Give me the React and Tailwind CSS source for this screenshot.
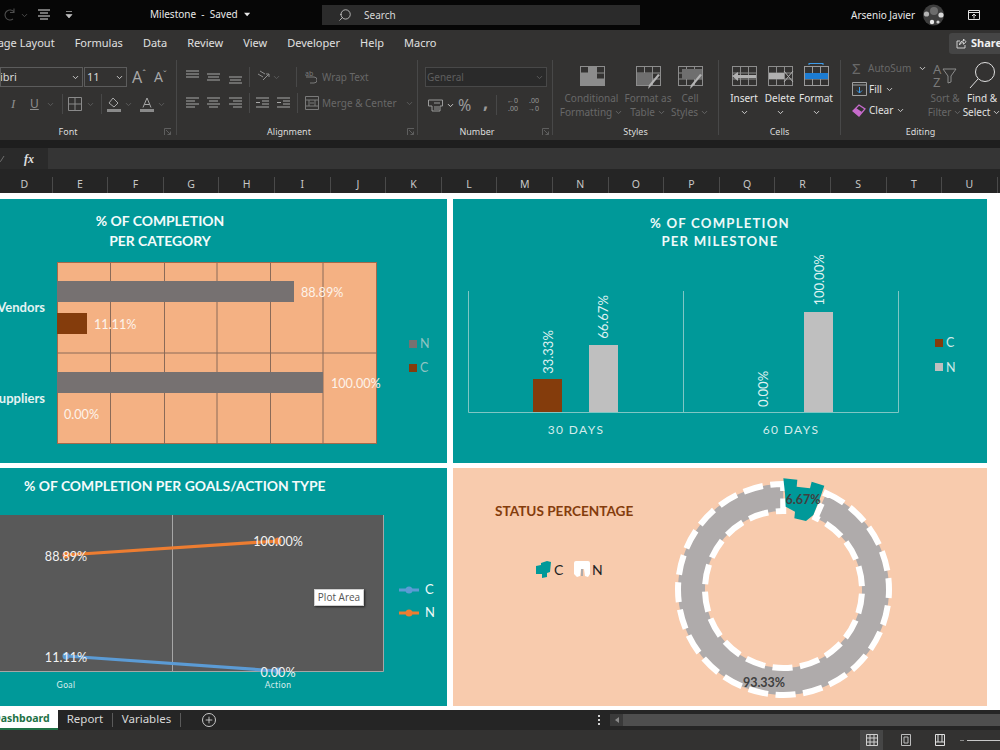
import React from "react";
import { ChevronDown, Search, Plus } from "lucide-react";

const Chev = ({ c = "text-[#8a8a8a]", cn = "" }) => <ChevronDown className={`${c} ${cn} w-[9px] h-[9px] shrink-0`} strokeWidth={2.5} />;
const Sep = ({ cn = "" }) => <div className={`w-px h-[20px] bg-[#484848] shrink-0 ${cn}`} />;

const Lines = ({ rows, w = 14, h = 14, color = "#a8a8a8", cn = "" }) => (
  <svg width={w} height={h} viewBox={`0 0 ${w} ${h}`} className={`shrink-0 ${cn}`}>
    {rows.map((r, i) => <line key={i} x1={r[0]} x2={r[1]} y1={r[2]} y2={r[2]} stroke={r[3] || color} strokeWidth="1" />)}
  </svg>
);
const AL = [[0, 13, 2], [0, 9, 5], [0, 13, 8], [0, 9, 11]];
const AC = [[0, 13, 2], [2, 11, 5], [0, 13, 8], [2, 11, 11]];
const AR = [[0, 13, 2], [4, 13, 5], [0, 13, 8], [4, 13, 11]];

const Launcher = ({ cn = "" }) => (
  <svg width="8" height="8" viewBox="0 0 8 8" className={`shrink-0 ${cn}`}><path d="M.5 7V.5H7M2 2l4.5 4.5M6.5 3.5v3h-3" fill="none" stroke="#5e5e5e" /></svg>
);

const Group = ({ cn, label, labelCn = "", launcher, children }) => (
  <div className={`${cn} shrink-0 h-[75px] flex flex-col`}>
    <div className="h-[65px] shrink-0">{children}</div>
    <div className="h-[14px] flex items-center text-[9px] text-[#dcdcdc]">
      <div className={`flex-1 text-center ${labelCn}`}>{label}</div>
      {launcher}
    </div>
  </div>
);

const Big = ({ cn = "", children, l1, l2, chev, dim }) => (
  <div className={`flex flex-col items-center ${cn}`}>
    <div className="h-[27px] flex items-start justify-center mt-[4px]">{children}</div>
    <div className={`text-[10px] leading-[14px] whitespace-nowrap ${dim ? "text-[#686868]" : "text-[#e2e2e2]"}`}>{l1}</div>
    <div className={`text-[10px] leading-[14px] whitespace-nowrap flex items-center gap-[2px] ${dim ? "text-[#686868]" : "text-[#e2e2e2]"}`}>
      {l2}{chev && <Chev c={dim ? "text-[#686868]" : "text-[#d0d0d0]"} />}
    </div>
  </div>
);

const TableBase = ({ children, stroke = "#8c8c8c" }) => (
  <svg width="28" height="26" viewBox="0 0 28 26" className="shrink-0">
    <rect x="2.5" y="2.5" width="24" height="19" fill="none" stroke={stroke} />
    <path d="M10.5 2.5v19M18.5 2.5v19M2.5 9h24M2.5 15h24" stroke={stroke} fill="none" />
    {children}
  </svg>
);

function TitleBar() {
  return (
    <div className="h-[30px] bg-[#060606] flex items-center text-[#e8e8e8] shrink-0">
      <svg width="14" height="16" viewBox="0 0 14 16" className="ml-[2px] shrink-0"><path d="M12 5a5 5 0 1 0-1 7M12 1.5V5.5H8" fill="none" stroke="#4d4d4d" strokeWidth="1.1" /></svg>
      <Chev c="text-[#4d4d4d]" cn="ml-[4px]" />
      <Lines w={14} h={14} color="#e0e0e0" cn="ml-[8px]" rows={[[1, 13, 2], [3, 11, 5], [1, 13, 8], [3, 11, 11]]} />
      <svg width="8" height="10" viewBox="0 0 8 10" className="ml-[14px] shrink-0"><path d="M1 1.5h6M1 4.5h6l-3 3.5z" fill="#bdbdbd" stroke="#bdbdbd" strokeWidth=".7" /></svg>
      <div className="ml-[77px] w-[100px] text-[10px] flex items-center whitespace-pre -mt-[1px]">Milestone  -  Saved
        <svg width="7" height="5" viewBox="0 0 7 5" className="ml-[6px]"><path d="M0 .5h7L3.5 4.5z" fill="#e8e8e8" /></svg>
      </div>
      <div className="ml-[72px] w-[318px] h-[20px] bg-[#2b2b2b] flex items-center text-[10px] text-[#d8d8d8]">
        <Search className="w-[14px] h-[14px] ml-[16px] -scale-x-100 text-[#d8d8d8]" strokeWidth={1.3} />
        <span className="ml-[12px]">Search</span>
      </div>
      <div className="ml-[211px] text-[10px] whitespace-nowrap w-[63px]">Arsenio Javier</div>
      <svg width="21" height="22" viewBox="0 0 21 22" className="ml-[9px] shrink-0">
        <circle cx="10.5" cy="11" r="10.5" fill="#3e3e3e" /><circle cx="11" cy="7" r="4" fill="#6c6c6c" />
        <circle cx="18" cy="11" r="2.6" fill="#d8d8d8" /><circle cx="3.5" cy="10" r="2.6" fill="#b4b4b4" /><circle cx="9" cy="18" r="2.2" fill="#e8e8e8" /><circle cx="15" cy="18" r="1.6" fill="#cfcfcf" />
      </svg>
      <svg width="14" height="12" viewBox="0 0 14 12" className="ml-[23px] shrink-0"><path d="M1.5 1.5h11v9h-11zM1.5 3.5h11M7 9.5V5.5M5 7l2-2 2 2" fill="none" stroke="#e0e0e0" /></svg>
    </div>
  );
}

function TabsRow() {
  return (
    <div className="h-[30px] bg-[#333231] flex items-center pb-[4px] text-[11px] text-[#e0e0e0] overflow-hidden shrink-0">
      <span className="-ml-[9px] whitespace-nowrap">Page Layout</span>
      <div className="flex gap-[20px] ml-[20px]">
        <span>Formulas</span><span>Data</span><span>Review</span><span>View</span><span>Developer</span><span>Help</span><span>Macro</span>
      </div>
      <div className="ml-auto -mr-[6px] w-[57px] h-[21px] bg-[#454545] rounded-[3px] flex items-center pl-[7px] gap-[4px] font-bold text-[#f0f0f0]">
        <svg width="11" height="11" viewBox="0 0 11 11" className="shrink-0"><path d="M4 3H1v7h8V7M3.5 7c0-3 2-4 4-4V1L10 3.8 7.5 6.3V4.6c-2 0-3.2.6-4 2.4z" fill="none" stroke="#dcdcdc" strokeWidth=".9" /></svg>
        Share
      </div>
    </div>
  );
}

function FontGroup() {
  return (
    <Group cn="w-[176px]" label="Font" labelCn="pr-[28px]" launcher={<Launcher cn="mr-[4px]" />}>
      <div className="flex items-center mt-[7px] h-[20px] text-[11px] text-[#d8d8d8]">
        <div className="w-[83px] h-[20px] border border-[#5c5c5c] flex items-center overflow-hidden">
          <span className="-ml-[17px] flex-1 whitespace-nowrap">Calibri</span><Chev c="text-[#d0d0d0]" cn="mr-[2px]" />
        </div>
        <div className="w-[43px] h-[20px] ml-[1px] border border-[#5c5c5c] flex items-center pl-[2px]">
          <span className="flex-1">11</span><Chev c="text-[#d0d0d0]" cn="mr-[2px]" />
        </div>
        <span className="ml-[5px] w-[17px] text-[16px] text-[#a8a8a8] leading-none whitespace-nowrap">A<span className="text-[9px] align-top">ˆ</span></span>
        <span className="ml-[5px] w-[17px] text-[14px] text-[#a8a8a8] leading-none whitespace-nowrap">A<span className="text-[9px] align-top">ˇ</span></span>
      </div>
      <div className="flex items-center mt-[7px] h-[20px] text-[#8e8e8e]">
        <span className="ml-[11px] w-[10px] text-[13px] italic [font-family:'Liberation_Serif',serif]">I</span>
        <span className="ml-[9px] w-[10px] text-[12px] underline">U</span>
        <Chev c="text-[#5c5c5c]" cn="ml-[6px]" />
        <Sep cn="ml-[7px]" />
        <svg width="14" height="14" viewBox="0 0 14 14" className="ml-[5px] shrink-0"><path d="M.5.5h13v13H.5zM7 .5v13M.5 7h13" fill="none" stroke="#8a8a8a" /></svg>
        <Chev c="text-[#5c5c5c]" cn="ml-[4px]" />
        <Sep cn="ml-[6px]" />
        <svg width="14" height="15" viewBox="0 0 14 15" className="ml-[5px] shrink-0"><path d="M6 1l5 5-4 4-5-4z" fill="none" stroke="#a8a8a8" /><rect x="0" y="12" width="14" height="3" fill="#8a8a8a" /></svg>
        <Chev c="text-[#5c5c5c]" cn="ml-[3px]" />
        <svg width="14" height="15" viewBox="0 0 14 15" className="ml-[7px] shrink-0"><path d="M3 10.5L7 1l4 9.5M4.5 7.5h5" fill="none" stroke="#a8a8a8" /><rect x="0" y="12" width="14" height="3" fill="#8a8a8a" /></svg>
        <Chev c="text-[#5c5c5c]" cn="ml-[3px]" />
      </div>
    </Group>
  );
}

function AlignGroup() {
  return (
    <Group cn="w-[241px] border-l border-[#484848]" label="Alignment" labelCn="pr-[6px]" launcher={<Launcher cn="mr-[2px]" />}>
      <div className="flex items-center mt-[8px] h-[18px] pl-[9px] text-[10px] text-[#686868]">
        <Lines rows={[[0, 13, 1], [0, 13, 4], [0, 13, 7]]} />
        <Lines cn="ml-[7px]" rows={[[0, 13, 4], [1, 12, 7], [0, 13, 10]]} />
        <Lines cn="ml-[8px]" rows={[[0, 13, 7], [1, 12, 10], [0, 13, 13]]} />
        <Sep cn="ml-[6px]" />
        <svg width="15" height="14" viewBox="0 0 15 14" className="ml-[6px] shrink-0"><path d="M2 4l5 3M4 1l5 3M7 10l6-6M10 4h3v3" fill="none" stroke="#8e8e8e" /></svg>
        <Chev c="text-[#5c5c5c]" cn="ml-[1px]" />
        <Sep cn="ml-[15px]" />
        <svg width="12" height="14" viewBox="0 0 12 14" className="ml-[8px] shrink-0"><path d="M1 7h8a2.5 2.5 0 0 1 0 6H5" fill="none" stroke="#7a7a7a" /><text x="0" y="6" fontSize="7" fill="#7a7a7a">ab</text></svg>
        <span className="ml-[5px] whitespace-nowrap">Wrap Text</span>
      </div>
      <div className="flex items-center mt-[8px] h-[18px] pl-[9px] text-[10px] text-[#686868]">
        <Lines rows={AL} /><Lines cn="ml-[7px]" rows={AC} /><Lines cn="ml-[8px]" rows={AR} />
        <Sep cn="ml-[6px]" />
        <Lines cn="ml-[6px]" rows={[[0, 13, 2], [6, 13, 5], [6, 13, 8], [0, 13, 11], [0, 4, 6.5]]} />
        <Lines cn="ml-[7px]" rows={[[0, 13, 2], [6, 13, 5], [6, 13, 8], [0, 13, 11], [0, 4, 6.5]]} />
        <Sep cn="ml-[6px]" />
        <svg width="14" height="14" viewBox="0 0 14 14" className="ml-[7px] shrink-0"><path d="M.5.5h13v13H.5zM.5 4h13M.5 10h13M4 4v6M10 4v6M5 7h4" fill="none" stroke="#7a7a7a" /></svg>
        <span className="ml-[3px] whitespace-nowrap">Merge &amp; Center</span>
        <Chev c="text-[#5c5c5c]" cn="ml-[8px]" />
      </div>
    </Group>
  );
}

function NumberGroup() {
  return (
    <Group cn="w-[135px] border-l border-[#484848]" label="Number" labelCn="pr-[6px]" launcher={<Launcher cn="mr-[2px]" />}>
      <div className="ml-[7px] mt-[7px] w-[122px] h-[20px] border border-[#484848] bg-[#2a2a2a] flex items-center pl-[1px] text-[10px] text-[#5e5e5e]">
        <span className="flex-1">General</span><Chev c="text-[#5c5c5c]" cn="mr-[2px]" />
      </div>
      <div className="flex items-center mt-[8px] h-[20px] pl-[10px] text-[#9a9a9a]">
        <svg width="15" height="13" viewBox="0 0 15 13" className="shrink-0"><path d="M.5 1h14v6H12v5H4V7H.5z" fill="none" stroke="#9a9a9a" /><path d="M6 4h6M6 8h5M6 10h5" stroke="#9a9a9a" /></svg>
        <Chev c="text-[#cfcfcf]" cn="ml-[3px]" />
        <span className="ml-[3px] text-[16px] leading-none w-[16px]">%</span>
        <span className="ml-[9px] text-[18px] leading-none w-[6px] font-bold -mt-[6px]">,</span>
        <Sep cn="ml-[7px]" />
        <div className="ml-[5px] text-[7px] leading-[8px] w-[16px] text-right whitespace-nowrap">←0<br />.00</div>
        <div className="ml-[5px] text-[7px] leading-[8px] w-[16px] text-right whitespace-nowrap">.00<br />→0</div>
      </div>
    </Group>
  );
}

function StylesGroup() {
  return (
    <Group cn="w-[166px] border-l border-[#484848]" label="Styles">
      <div className="flex pl-[6px]">
        <Big cn="w-[65px]" dim l1="Conditional" l2="Formatting" chev>
          <TableBase><rect x="11" y="3" width="7" height="6" fill="#8c8c8c" /><rect x="3" y="9" width="15" height="6" fill="#8c8c8c" /><rect x="3" y="15" width="23" height="6" fill="#8c8c8c" /></TableBase>
        </Big>
        <Big cn="w-[52px] -ml-[2px]" dim l1="Format as" l2="Table" chev>
          <TableBase><path d="M3 9h15v12H3z" fill="#6f6f6f" /><path d="M26 11L17 22l-3 3 1-4 9-11z" fill="#b4b4b4" /></TableBase>
        </Big>
        <Big cn="w-[40px] -ml-[4px]" dim l1="Cell" l2="Styles" chev>
          <TableBase><path d="M6 5h20v10H6z" fill="#6f6f6f" /><path d="M26 11L17 22l-3 3 1-4 9-11z" fill="#b4b4b4" /></TableBase>
        </Big>
      </div>
    </Group>
  );
}

function CellsGroup() {
  const B = ({ children, t }) => (
    <div className="w-[36px] flex flex-col items-center">
      <div className="h-[27px] mt-[4px]">{children}</div>
      <div className="text-[10px] leading-[14px] text-[#e6e6e6]">{t}</div>
      <div className="h-[14px] flex items-center"><Chev c="text-[#d8d8d8]" /></div>
    </div>
  );
  return (
    <Group cn="w-[122px] border-l border-[#484848]" label="Cells">
      <div className="flex pl-[7px]">
        <B t="Insert"><TableBase><path d="M2 12l6-4v3h18v3H8v3z" fill="#b0b0b0" /></TableBase></B>
        <B t="Delete"><TableBase><rect x="3" y="9" width="15" height="6" fill="#b0b0b0" /><path d="M18 7l9 11M27 7l-9 11" stroke="#b0b0b0" /></TableBase></B>
        <B t="Format">
          <svg width="28" height="26" viewBox="0 0 28 26" className="-mt-[1px]"><path d="M7 .5h14M7 0v2M21 0v2" stroke="#3d9bea" /><rect x="2.5" y="3.5" width="24" height="19" fill="none" stroke="#9a9a9a" /><path d="M10.5 3.5v19M18.5 3.5v19M2.5 16h24" stroke="#9a9a9a" /><rect x="3" y="10" width="23" height="6" fill="#1c7cd2" /></svg>
        </B>
      </div>
    </Group>
  );
}

function EditingGroup() {
  return (
    <Group cn="w-[160px] border-l border-[#484848]" label="Editing" labelCn="pl-[12px] pr-[12px]">
      <div className="flex">
        <div className="w-[94px] pl-[11px] text-[10px] -mt-[2px]">
          <div className="flex items-center h-[20px] text-[#686868]">
            <span className="text-[15px] w-[15px] leading-none">Σ</span><span className="ml-[1px]">AutoSum</span><Chev c="text-[#d0d0d0]" cn="ml-[7px]" />
          </div>
          <div className="flex items-center h-[20px] mt-[1px] text-[#e2e2e2]">
            <svg width="15" height="14" viewBox="0 0 15 14" className="shrink-0"><path d="M.5.5h14v13H.5zM.5 3h14" fill="none" stroke="#a0a0a0" /><path d="M7.5 5v6M5 8.5l2.5 2.5L10 8.5" fill="none" stroke="#3d9bea" /></svg>
            <span className="ml-[2px]">Fill</span><Chev c="text-[#d0d0d0]" cn="ml-[3px]" />
          </div>
          <div className="flex items-center h-[20px] mt-[1px] text-[#e2e2e2]">
            <svg width="15" height="13" viewBox="0 0 15 13" className="shrink-0"><path d="M1 7l6-6 6 4-6 7z" fill="none" stroke="#c76bcc" strokeWidth="1.3" /><path d="M1 7l3-3 6 4-3 4z" fill="#c76bcc" /></svg>
            <span className="ml-[2px]">Clear</span><Chev c="text-[#d0d0d0]" cn="ml-[3px]" />
          </div>
        </div>
        <Big cn="w-[32px] ml-[1px]" dim l1="Sort &amp;" l2="Filter" chev>
          <svg width="26" height="26" viewBox="0 0 26 26" className="-mt-[1px]"><text x="1" y="11" fontSize="13" fill="#7a7a7a">A</text><text x="1" y="24" fontSize="13" fill="#7a7a7a">Z</text><path d="M11 6h13l-5 7v6l-3 1v-7z" fill="none" stroke="#8c8c8c" /></svg>
        </Big>
        <Big cn="w-[36px] ml-[3px]" l1="Find &amp;" l2="Select" chev>
          <svg width="28" height="30" viewBox="0 0 28 30" className="-mt-[3px]"><circle cx="17" cy="11" r="9.5" fill="none" stroke="#e0e0e0" /><path d="M10 18L2 27" stroke="#e0e0e0" /></svg>
        </Big>
      </div>
    </Group>
  );
}

function Ribbon() {
  return (
    <div className="h-[80px] bg-[#333231] flex overflow-hidden shrink-0">
      <FontGroup /><AlignGroup /><NumberGroup /><StylesGroup /><CellsGroup /><EditingGroup />
    </div>
  );
}

function FormulaBar() {
  return (
    <div className="bg-[#1e1e1e] pt-[8px] shrink-0">
      <div className="h-[21px] flex bg-[#2a2a2a]">
        <div className="w-[47px] flex items-center text-[#b8b8b8]">
          <svg width="5" height="8" viewBox="0 0 5 8" className="shrink-0"><path d="M-1 5l1.5 1.5L4 1" fill="none" stroke="#6e6e6e" /></svg>
          <span className="ml-[19px] text-[12px] italic font-bold [font-family:'Liberation_Serif',serif] text-[#e0e0e0]">fx</span>
        </div>
        <div className="flex-1 bg-[#353535] ml-[1px]" />
      </div>
    </div>
  );
}

const COLS = "DEFGHIJKLMNOPQRSTU".split("");
function ColHeaders() {
  return (
    <div className="h-[24px] bg-[#252525] flex overflow-hidden shrink-0">
      <div className="flex -ml-[3px] items-end">
        {COLS.map((c) => (
          <div key={c} className="w-[55.6px] h-[16px] shrink-0 border-r border-[#4a4a4a] flex items-center justify-center text-[10.5px] text-[#c8c8c8]">{c}</div>
        ))}
      </div>
    </div>
  );
}

const LB = "[font-family:Lato,sans-serif]";

function Panel1() {
  const grid = [110.5, 164.5, 217, 270.5, 323];
  return (
    <div className="bg-[#009999] h-[264px] flex flex-col overflow-hidden">
      <div className={`h-[62px] w-[320px] pt-[12px] text-center text-[13.9px] leading-[20px] font-bold text-[#f4fbfb] ${LB}`}>
        % OF COMPLETION<br />PER CATEGORY
      </div>
      <svg width="447" height="202" viewBox="0 261 447 202" className={`block ${LB}`}>
        <rect x="57.5" y="262.5" width="319" height="181" fill="#F4B183" stroke="#A3694A" />
        {grid.map((x) => <line key={x} x1={x} x2={x} y1="263" y2="444" stroke="#8a6a58" />)}
        <line x1="57" x2="377" y1="353" y2="353" stroke="#8a6a58" />
        <rect x="57" y="281" width="237" height="21" fill="#767171" />
        <rect x="57" y="313" width="30" height="21" fill="#843C0C" />
        <rect x="57" y="372" width="266" height="21" fill="#767171" />
        <g fill="#fdf3ea" fontSize="12.6">
          <text x="301" y="297">88.89%</text><text x="94" y="329">11.11%</text><text x="331" y="388">100.00%</text><text x="64" y="419">0.00%</text>
        </g>
        <g fill="#e4f3f3" fontSize="13" fontWeight="700" textAnchor="end">
          <text x="45" y="312">Vendors</text><text x="45" y="403">Suppliers</text>
        </g>
        <rect x="409" y="340" width="8" height="8" fill="#767171" /><rect x="409" y="364" width="8" height="8" fill="#843C0C" />
        <g fill="#8fc4c2" fontSize="12.5"><text x="420" y="348">N</text><text x="420" y="372">C</text></g>
      </svg>
    </div>
  );
}

function Panel2() {
  return (
    <div className="bg-[#009999] h-[264px] flex flex-col overflow-hidden">
      <div className={`h-[56px] pt-[15px] text-center text-[13.2px] leading-[18px] font-bold tracking-[1.2px] text-[#eef9f9] ${LB}`}>
        <div className="w-[534px]">% OF COMPLETION<br />PER MILESTONE</div>
      </div>
      <svg width="531" height="208" viewBox="453 255 531 208" className={`block ${LB}`}>
        <path d="M468.5 291v121.5h430V291M683.5 291v121" fill="none" stroke="#7fc6c4" />
        <rect x="533" y="379" width="29" height="33" fill="#843C0C" />
        <rect x="589" y="345" width="29" height="67" fill="#BFBFBF" />
        <rect x="804" y="312" width="29" height="100" fill="#BFBFBF" />
        <g fill="#dff1f1" fontSize="13" textAnchor="middle">
          <text transform="translate(553 352) rotate(-90)">33.33%</text>
          <text transform="translate(608 317) rotate(-90)">66.67%</text>
          <text transform="translate(768 389) rotate(-90)">0.00%</text>
          <text transform="translate(824 280) rotate(-90)">100.00%</text>
        </g>
        <g fill="#d4ecec" fontSize="12" textAnchor="middle" letterSpacing="1.4">
          <text x="576" y="434">30 DAYS</text><text x="791" y="434">60 DAYS</text>
        </g>
        <rect x="935" y="339" width="8" height="8" fill="#843C0C" /><rect x="935" y="363" width="8" height="8" fill="#BFBFBF" />
        <g fill="#cfe9e8" fontSize="12.5"><text x="946" y="347">C</text><text x="946" y="372">N</text></g>
      </svg>
    </div>
  );
}

function Panel3() {
  return (
    <div className="bg-[#009999] h-[238px] relative overflow-hidden">
      <div className={`h-[47px] pl-[24px] pt-[9px] text-[13.9px] leading-[18px] font-bold text-[#f4fbfb] whitespace-nowrap ${LB}`}>% OF COMPLETION PER GOALS/ACTION TYPE</div>
      <svg width="447" height="191" viewBox="0 515 447 191" className={`block ${LB}`}>
        <rect x="-2" y="515" width="385" height="156.5" fill="#595959" />
        <path d="M-2 671.5h385.5V515" fill="none" stroke="#a6a6a6" />
        <line x1="172.5" x2="172.5" y1="515" y2="671" stroke="#a6a6a6" />
        <line x1="66" y1="555" x2="278" y2="541" stroke="#ED7D31" strokeWidth="3.2" />
        <circle cx="66" cy="555" r="3.5" fill="#ED7D31" /><circle cx="278" cy="541" r="3.5" fill="#ED7D31" />
        <line x1="66" y1="656" x2="278" y2="671" stroke="#5B9BD5" strokeWidth="3.2" />
        <circle cx="66" cy="656" r="3.5" fill="#5B9BD5" /><circle cx="278" cy="671" r="3.5" fill="#5B9BD5" />
        <g fill="#f2f2f2" fontSize="12.6" textAnchor="middle">
          <text x="66" y="561">88.89%</text><text x="278" y="546">100.00%</text><text x="66" y="662">11.11%</text><text x="278" y="677">0.00%</text>
        </g>
        <g fill="#d8eeee" fontSize="8.5" textAnchor="middle" letterSpacing=".4">
          <text x="66" y="688">Goal</text><text x="278" y="688">Action</text>
        </g>
        <line x1="399" x2="419" y1="590" y2="590" stroke="#5B9BD5" strokeWidth="3" /><circle cx="409" cy="590" r="3.5" fill="#5B9BD5" />
        <line x1="399" x2="419" y1="613" y2="613" stroke="#ED7D31" strokeWidth="3" /><circle cx="409" cy="613" r="3.5" fill="#ED7D31" />
        <g fill="#eef9f9" fontSize="13"><text x="425" y="594">C</text><text x="425" y="617">N</text></g>
      </svg>
      <div className="absolute left-[314px] top-[121px] w-[50px] h-[17px] bg-white border border-[#d0d0d0] shadow-[1px_1px_2px_rgba(0,0,0,0.6)] flex items-center justify-center text-[10px] text-[#555] [font-family:'Open_Sans',sans-serif]">Plot Area</div>
    </div>
  );
}

const polar = (r, deg) => {
  const a = (deg * Math.PI) / 180;
  return [(783.5 + r * Math.sin(a)).toFixed(2), (589.5 - r * Math.cos(a)).toFixed(2)].join(" ");
};
const RING = `M${polar(105.5, 24)} A105.5 105.5 0 1 1 ${polar(105.5, 359.8)} L${polar(78.5, 359.8)} A78.5 78.5 0 1 0 ${polar(78.5, 24)} Z`;
const TEAL = [[430, 40], [472, 44], [470, 65], [510, 70], [515, 50], [553, 62], [540, 100], [520, 150], [498, 168], [463, 160], [465, 140], [437, 125], [435, 85]]
  .map(([x, y]) => `${640 + x / 3},${465 + y / 3}`).join(" ");

function Panel4() {
  return (
    <div className="bg-[#F8CBAD] h-[238px] flex overflow-hidden">
      <div className={`w-[207px] shrink-0 pl-[42px] pt-[33px] ${LB}`}>
        <div className="text-[13.6px] leading-[20px] font-bold text-[#843C0C] whitespace-nowrap">STATUS PERCENTAGE</div>
        <div className="flex items-center mt-[39px] ml-[41px] text-[14px] text-[#222] h-[18px]">
          <svg width="16" height="17" viewBox="0 0 16 17" className="shrink-0"><path d="M5 4V2l6-2 4 1-1 10-3 1v4l-5 1v-4H0V5z" fill="#009999" /></svg>
          <span className="ml-[2px] w-[20px]">C</span>
          <svg width="16" height="17" viewBox="0 0 16 17" className="shrink-0"><path d="M2 0h12q2 0 2 2v11l-2 3-3-1-1-7H7l-1 7-3 1-3-3V2q0-2 2-2z" fill="#fff" /><rect x="7" y="8" width="2" height="7" fill="#AFABAB" /></svg>
          <span className="ml-[2px]">N</span>
        </div>
      </div>
      <svg width="250" height="238" viewBox="660 468 250 238" className={`block shrink-0 ${LB}`}>
        <path d={RING} fill="#AFABAB" stroke="#fff" strokeWidth="6" strokeDasharray="20 7.5" />
        <polygon points={TEAL} fill="#009999" />
        <g fill="#404040" fontSize="12.5" fontWeight="700" textAnchor="middle">
          <text x="803" y="504">6.67%</text><text x="764" y="687">93.33%</text>
        </g>
      </svg>
    </div>
  );
}

function Sheet() {
  return (
    <div className="h-[517px] bg-white shrink-0 pt-[6px] overflow-hidden">
      <div className="grid grid-cols-[447px_534px] grid-rows-[264px_238px] gap-x-[6px] gap-y-[5px]">
        <Panel1 /><Panel2 /><Panel3 /><Panel4 />
      </div>
    </div>
  );
}

function SheetTabs() {
  return (
    <div className="h-[20px] bg-[#252525] flex items-stretch text-[11.5px] text-[#d8d8d8] shrink-0 overflow-hidden">
      <div className="w-[58px] bg-white text-[#1e7145] font-bold text-[10.5px] flex items-center border-b-2 border-[#1e7145] overflow-hidden whitespace-nowrap">
        <span className="-ml-[7px]">Dashboard</span>
      </div>
      <div className="w-[55px] flex items-center justify-center border-r border-[#5a5a5a] my-[3px] pb-[3px]">Report</div>
      <div className="w-[68px] flex items-center justify-center border-r border-[#5a5a5a] my-[3px] pb-[3px]">Variables</div>
      <div className="ml-[21px] flex items-center">
        <div className="w-[14px] h-[14px] rounded-full border border-[#c8c8c8] flex items-center justify-center"><Plus className="w-[10px] h-[10px] text-[#d8d8d8]" strokeWidth={2} /></div>
      </div>
      <div className="ml-[382px] flex flex-col justify-center gap-[2px]">
        <div className="w-[2px] h-[2px] bg-[#d0d0d0]" /><div className="w-[2px] h-[2px] bg-[#d0d0d0]" /><div className="w-[2px] h-[2px] bg-[#d0d0d0]" />
      </div>
      <div className="ml-[10px] flex-1 flex my-[4px] h-[12px]">
        <div className="w-[13px] bg-[#3a3a3a] flex items-center justify-center"><svg width="4" height="6" viewBox="0 0 4 6"><path d="M4 0v6L0 3z" fill="#8a8a8a" /></svg></div>
        <div className="flex-1 bg-[#4e4e4e]" />
      </div>
    </div>
  );
}

function StatusBar() {
  return (
    <div className="h-[20px] bg-[#333231] flex items-center shrink-0 overflow-hidden">
      <div className="ml-[860px] w-[23px] h-[20px] bg-[#464646] flex items-center justify-center shrink-0">
        <svg width="12" height="12" viewBox="0 0 12 12"><path d="M.5.5h11v11H.5zM4 .5v11M8 .5v11M.5 4h11M.5 8h11" fill="none" stroke="#cfcfcf" /></svg>
      </div>
      <svg width="12" height="12" viewBox="0 0 12 12" className="ml-[17px] shrink-0"><path d="M1.5.5h9v11h-9zM4 3h4v6H4z" fill="none" stroke="#bdbdbd" /></svg>
      <svg width="12" height="12" viewBox="0 0 12 12" className="ml-[22px] shrink-0"><path d="M1.5.5h9v11h-9zM1.5 8h9M4 .5V8M8 .5V8" fill="none" stroke="#e0e0e0" /></svg>
      <div className="ml-[14px] w-[4px] h-px bg-[#8a8a8a] shrink-0" />
      <div className="ml-[3px] flex-1 h-px bg-[#c8c8c8]" />
    </div>
  );
}

export default function App() {
  return (
    <div className="w-[1000px] h-[750px] overflow-hidden flex flex-col bg-[#333231] [font-family:'Noto_Sans',sans-serif]">
      <TitleBar />
      <TabsRow />
      <Ribbon />
      <FormulaBar />
      <ColHeaders />
      <Sheet />
      <SheetTabs />
      <StatusBar />
    </div>
  );
}
